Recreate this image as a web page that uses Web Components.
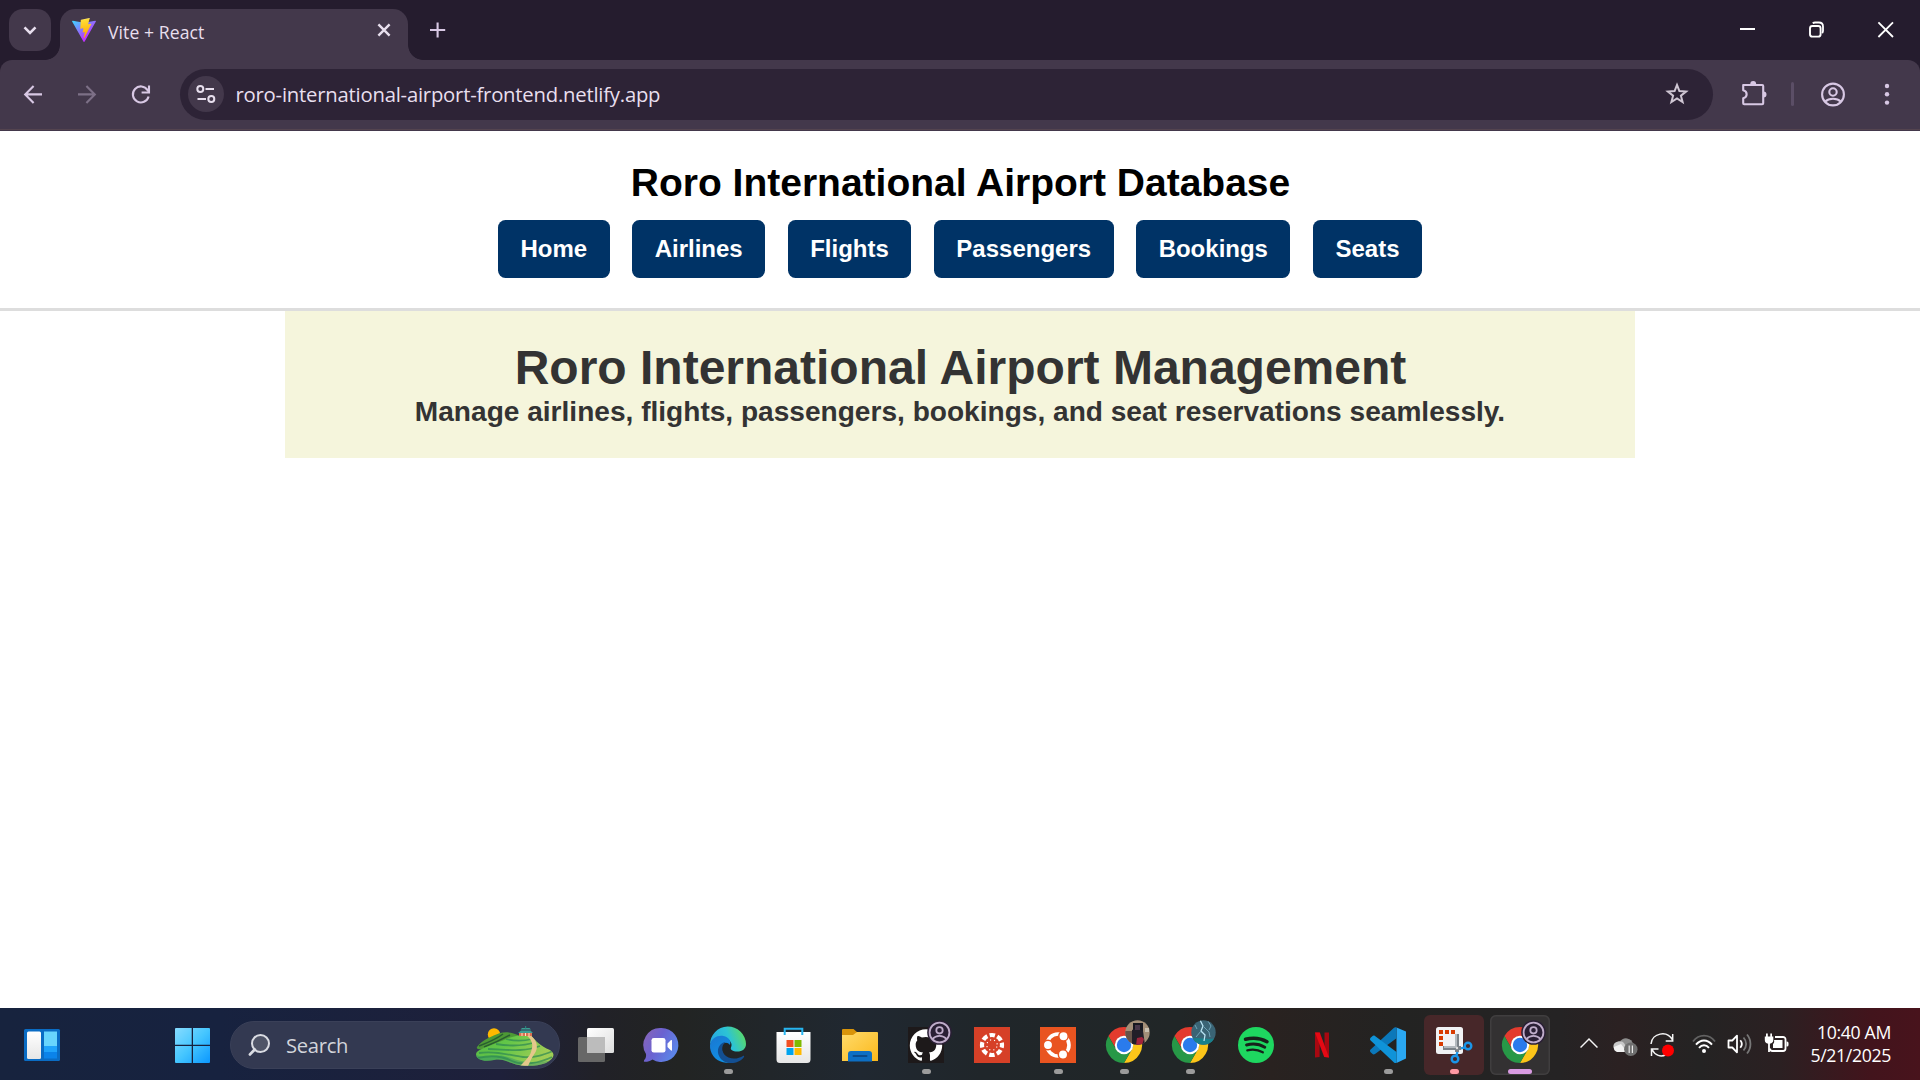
<!DOCTYPE html>
<html lang="en">
<head>
<meta charset="utf-8">
<title>Vite + React</title>
<style>
html, body { margin: 0; height: 100%; background: #fff; overflow: hidden; }
body { font-family: "Liberation Sans", Arial, sans-serif; }
</style>
</head>
<body>
<desktop-screen></desktop-screen>

<template id="t-desktop-screen">
<style>
:host { display: flex; flex-direction: column; width: 1920px; height: 1080px; background: #fff; }
airport-page { flex: 1; }
</style>
<tab-strip><span>Vite + React</span></tab-strip>
<tool-bar>roro-international-airport-frontend.netlify.app</tool-bar>
<airport-page></airport-page>
<task-bar></task-bar>
</template>

<template id="t-tab-strip">
<style>
:host { display: flex; height: 60px; background: #251c2e; box-sizing: border-box; padding: 9px 0 0 9px; }
svg { display: block; }
.menu { width: 42px; height: 42px; border-radius: 14px; background: #43384b; margin-right: 9px; }
.tab { position: relative; width: 348px; height: 51px; box-sizing: border-box; border-radius: 15px 15px 0 0; background: #43384b; display: flex; align-items: flex-start; padding: 9px 12px 0; }
.tab::before, .tab::after { content: ""; position: absolute; bottom: 0; width: 15px; height: 15px; }
.tab::before { left: -15px; background: radial-gradient(circle at 0 0, transparent 14.5px, #43384b 15.2px); }
.tab::after { right: -15px; background: radial-gradient(circle at 100% 0, transparent 14.5px, #43384b 15.2px); }
.name { flex: 1; margin-left: 12px; font: 17.6px/28px "Open Sans", sans-serif; letter-spacing: .08px; color: #e8dfee; white-space: nowrap; }
.plus { margin: 12px 0 0 21px; }
.wins { margin-left: auto; display: flex; }
</style>
<div class="menu"><svg width="42" height="42" viewBox="0 0 42 42"><path d="M15.5 18.3l5.5 5.5 5.5-5.5" fill="none" stroke="#e8dfee" stroke-width="2.6"/></svg></div>
<div class="tab">
<svg width="24" height="24" viewBox="0 0 256 257"><defs><linearGradient id="va" x1="-.828%" x2="57.636%" y1="7.652%" y2="78.411%"><stop stop-color="#41d1ff"/><stop offset="1" stop-color="#bd34fe"/></linearGradient><linearGradient id="vb" x1="43.376%" x2="50.316%" y1="2.242%" y2="89.03%"><stop stop-color="#ffea83"/><stop offset=".083" stop-color="#ffdd35"/><stop offset="1" stop-color="#ffa800"/></linearGradient></defs><path fill="url(#va)" d="M255.153 37.938L134.897 252.976c-2.483 4.44-8.862 4.466-11.382.048L.875 37.958c-2.746-4.814 1.371-10.646 6.827-9.67l120.385 21.517a6.537 6.537 0 0 0 2.322-.004l117.867-21.483c5.438-.991 9.574 4.796 6.877 9.62Z"/><path fill="url(#vb)" d="M185.432.063L96.44 17.501a3.268 3.268 0 0 0-2.634 3.014l-5.474 92.456a3.268 3.268 0 0 0 3.997 3.378l24.777-5.718c2.318-.535 4.413 1.507 3.936 3.838l-7.361 36.047c-.495 2.426 1.782 4.5 4.151 3.78l15.304-4.649c2.372-.72 4.652 1.36 4.15 3.788l-11.698 56.621c-.732 3.542 3.979 5.473 5.943 2.437l1.313-2.028l72.516-144.72c1.215-2.423-.88-5.186-3.54-4.672l-25.505 4.922c-2.396.462-4.435-1.77-3.759-4.114l16.646-57.705c.677-2.35-1.37-4.583-3.769-4.113Z"/></svg>
<div class="name"><slot></slot></div>
<svg width="24" height="24" viewBox="0 0 24 24"><path d="M6.4 6.4l11.2 11.2M17.6 6.4L6.4 17.6" stroke="#e8dfee" stroke-width="2.4"/></svg>
</div>
<svg class="plus" width="18" height="18" viewBox="0 0 18 18"><path d="M1 9h15.200M8.600 1.400V16.600" stroke="#d8c8e4" stroke-width="2.1"/></svg>
<div class="wins">
<svg width="69" height="42" viewBox="0 0 69 42"><path d="M27 20h15" stroke="#fff" stroke-width="2"/></svg>
<svg width="69" height="42" viewBox="0 0 69 42"><path d="M30.700 14.200c.7-.5 1.500-.7 2.400-.7h3.800c2.400 0 4.100 1.700 4.100 4.100v4.200c0 .9-.3 1.700-.8 2.300" fill="none" stroke="#fff" stroke-width="1.8"/><rect x="28" y="17" width="10.6" height="10.6" rx="2.4" fill="none" stroke="#fff" stroke-width="1.9"/></svg>
<svg width="69" height="42" viewBox="0 0 69 42"><path d="M27.400 13.400l14.600 14.600M42 13.400l-14.600 14.600" stroke="#fff" stroke-width="1.8"/></svg>
</div>
</template>

<template id="t-tool-bar">
<style>
:host { display: block; height: 71px; background: #251c2e; }
.bar { display: flex; align-items: center; height: 71px; box-sizing: border-box; padding: 0 6px 2px; background: #43384b; border-radius: 12px 12px 0 0; border-bottom: 1px solid #43384b; box-shadow: inset 0 -1px #54444f; }
svg { display: block; flex: none; }
.omni { flex: 1; display: flex; align-items: center; height: 51px; margin: 0 14px 0 12px; border-radius: 26px; background: #2d2336; }
.info { width: 36px; height: 36px; border-radius: 50%; background: #43384b; margin-left: 7.5px; }
.url { flex: 1; margin-left: 12px; font: 20.3px/30px "Open Sans", sans-serif; letter-spacing: -.22px; color: #e8dfee; white-space: nowrap; padding-bottom: 1px; }
.div { width: 3px; height: 24px; border-radius: 2px; background: #5b4e66; margin: 0 12px 0 10px; }
</style>
<div class="bar">
<svg width="54" height="54" viewBox="0 0 54 54"><path d="M36 27.400H20M27.600 18.900L19.200 27.400l8.400 8.500" fill="none" stroke="#d8c8e4" stroke-width="2.100"/></svg>
<svg width="54" height="54" viewBox="0 0 54 54"><path d="M18 27.400h16M26.400 18.900l8.400 8.500-8.400 8.500" fill="none" stroke="#7d7087" stroke-width="2.100"/></svg>
<svg width="54" height="54" viewBox="0 0 54 54"><path d="M34.600 29.500a8 8 0 1 1-1-6.400l1.400 1.800" fill="none" stroke="#d8c8e4" stroke-width="2.100"/><path d="M35 18.500v7h-7.400" fill="none" stroke="#d8c8e4" stroke-width="2.100"/></svg>
<div class="omni">
<div class="info"><svg width="36" height="36" viewBox="0 0 36 36" fill="none" stroke="#e8dfee" stroke-width="2"><circle cx="12.300" cy="13" r="3"/><path d="M17.500 13h8.500M9.500 23H18"/><circle cx="23.300" cy="23" r="3"/></svg></div>
<div class="url"><slot></slot></div>
<svg width="36" height="36" viewBox="0 0 36 36" style="margin-right:18px"><path d="M18 8.900l2.400 6.200 6.700.4-5.200 4.200 1.700 6.400-5.600-3.600-5.600 3.600 1.700-6.400-5.200-4.200 6.700-.4z" fill="none" stroke="#cfc6d3" stroke-width="2"/></svg>
</div>
<svg width="54" height="54" viewBox="0 0 54 54"><path d="M16.200 18h19c.6 0 1 .4 1 1v17.300c0 .6-.4 1-1 1h-18c-.6 0-1-.4-1-1v-5c4.600-1.300 4.600-6.800 0-8z" fill="none" stroke="#d8c8e4" stroke-width="2.100" stroke-linejoin="round"/><path d="M23.200 17.500a3 3.400 0 0 1 6 0zM36.500 24.500a3 3 0 0 1 0 6z" fill="#d8c8e4"/></svg>
<div class="div"></div>
<svg width="54" height="54" viewBox="0 0 54 54" fill="none" stroke="#d8c8e4" stroke-width="2.100"><circle cx="27" cy="27.500" r="10.900"/><circle cx="27" cy="25" r="3.700"/><path d="M19 34.800c4-4 12-4 16 0"/></svg>
<svg width="54" height="54" viewBox="0 0 54 54" fill="#d8c8e4"><circle cx="27" cy="19" r="2.200"/><circle cx="27" cy="27.300" r="2.200"/><circle cx="27" cy="35.600" r="2.200"/></svg>
</div>
</template>

<template id="t-nav-link">
<style>
:host { display: block; }
a { display: block; height: 58px; box-sizing: border-box; padding: 15px 22.5px; border-radius: 7.5px; background: #003366; color: #fff; font: bold 24px/28px "Liberation Sans", Arial, sans-serif; text-decoration: none; }
</style>
<a><slot></slot></a>
</template>

<template id="t-airport-page">
<style>
:host { display: block; font-family: "Liberation Sans", Arial, sans-serif; background: #fff; }
header { box-sizing: border-box; height: 180px; padding-top: 29px; border-bottom: 3px solid #ddd; text-align: center; }
h1, h2, h3 { margin: 0; white-space: nowrap; }
h1 { font-size: 39px; line-height: 45px; color: #000; padding-left: 1px; }
nav { display: flex; justify-content: center; gap: 22.5px; margin-top: 15px; }
main { width: 1350px; height: 147px; box-sizing: border-box; margin: 0 auto; padding-top: 29px; background: #f5f5dc; color: #333; text-align: center; }
h2 { font-size: 48px; line-height: 56px; padding-left: 1px; }
h3 { font-size: 28.08px; line-height: 32px; }
</style>
<header>
<h1>Roro International Airport Database</h1>
<nav><nav-link>Home</nav-link><nav-link>Airlines</nav-link><nav-link>Flights</nav-link><nav-link>Passengers</nav-link><nav-link>Bookings</nav-link><nav-link>Seats</nav-link></nav>
</header>
<main>
<h2>Roro International Airport Management</h2>
<h3>Manage airlines, flights, passengers, bookings, and seat reservations seamlessly.</h3>
</main>
</template>

<template id="t-task-app">
<style>
:host { display: block; position: relative; width: 60px; height: 60px; flex: none; border-radius: 6px; box-sizing: border-box; }
:host([alert]) { background: #472729; }
:host([active]) { background: #333132; box-shadow: inset 0 0 0 1.500px #403e3f; }
i { display: none; position: absolute; left: 24.500px; bottom: 1px; width: 9px; height: 5px; border-radius: 2.500px; background: #9b9b9b; }
:host([running]) i { display: block; left: 25.500px; }
:host([alert]) i { background: #ff99a4; }
:host([active]) i { display: block; left: 18px; width: 24px; background: #d99be2; }
.badge { position: absolute; left: 31px; top: 5px; }
</style>
<slot></slot><div class="badge"><slot name="badge"></slot></div><i></i>
</template>

<template id="t-chrome-logo">
<style>:host, svg { display: block; }</style>
<svg width="60" height="60" viewBox="-30 -30 60 60"><path fill="#e33b2e" d="M-15.590-9A18 18 0 0 1 15.590-9H0A9 9 0 0 0-7.790 4.500Z"/><path transform="rotate(120)" fill="#fcc519" d="M-15.590-9A18 18 0 0 1 15.590-9H0A9 9 0 0 0-7.790 4.500Z"/><path transform="rotate(240)" fill="#279847" d="M-15.590-9A18 18 0 0 1 15.590-9H0A9 9 0 0 0-7.790 4.500Z"/><circle r="9.200" fill="#fff"/><circle r="7.200" fill="#2a7bec"/></svg>
</template>

<template id="t-profile-badge">
<style>:host, svg { display: block; }</style>
<svg width="25" height="25" viewBox="0 0 25 25"><circle cx="12.500" cy="12.500" r="12.300" fill="#2a1f35"/><g fill="none" stroke="#bfacca" stroke-width="1.800"><circle cx="12.500" cy="12.500" r="9.900"/><circle cx="12.500" cy="10.300" r="3.200"/><path d="M5.500 19c3.500-4.300 10.500-4.300 14 0"/></g></svg>
</template>

<template id="t-task-bar">
<style>
:host { display: flex; align-items: center; height: 72px; box-sizing: border-box; padding: 2px 29px 0 12px; color: #fff; font-family: "Open Sans", sans-serif;
 background: linear-gradient(90deg, #17233e 0, #17223f 220px, #1e203a 500px, #212127 600px, #222423 680px, #202831 860px, #20262a 980px, #212627 1180px, #292220 1270px, #232322 1400px, #252324 1560px, #2b2122 1620px, #242323 1700px, #2b2022 1780px, #42141c 1870px, #48131c 1920px); }
svg { display: block; flex: none; }
.start { margin: 0 8px 0 90px; }
.search { display: flex; align-items: center; width: 330px; height: 48px; box-sizing: border-box; border: 1px solid #3a4058; border-radius: 24px; background: #333951; margin-right: 6px; padding: 0 5px 0 17px; }
.search span { flex: 1; margin-left: 14px; font-size: 20.200px; line-height: 28px; letter-spacing: -.3px; color: #d2d4db; }
.apps { display: flex; gap: 6px; }
.tray { display: flex; align-items: center; margin-left: auto; }
.clock { font-size: 17.700px; line-height: 23px; text-align: right; margin-left: 22px; width: 80px; letter-spacing: -.350px; white-space: nowrap; padding-bottom: 2px; }
.clock div { margin-left: -20px; }
</style>
<task-app><svg width="60" height="60" viewBox="0 0 60 60"><defs><linearGradient id="w1" x2="0" y2="1"><stop stop-color="#fff"/><stop offset="1" stop-color="#e6e6e6"/></linearGradient></defs><rect x="12" y="14" width="36" height="32" rx="1.500" fill="#0a6cc4"/><rect x="15" y="16.500" width="14" height="27.500" rx="1.500" fill="url(#w1)"/><path d="M32 16.500h13V31H32z" fill="#68d5fd"/><path d="M32 31h13v6H32z" fill="#1fa3fb"/><path d="M32 37h13v6.500H32z" fill="#0b83ea"/></svg></task-app>
<task-app class="start"><svg width="60" height="60" viewBox="0 0 60 60"><defs><linearGradient id="g0" gradientUnits="userSpaceOnUse" x1="13" y1="13" x2="48" y2="48"><stop stop-color="#87dcff"/><stop offset=".5" stop-color="#45c6ff"/><stop offset="1" stop-color="#0a97ff"/></linearGradient></defs><path fill="url(#g0)" d="M14 13h15.700v16.700H13V14a1 1 0 0 1 1-1zM31 13h16a1 1 0 0 1 1 1v15.700H31zM13 31h16.700v17H14a1 1 0 0 1-1-1zM31 31h17v16a1 1 0 0 1-1 1H31z"/></svg></task-app>
<div class="search">
<svg width="24" height="24" viewBox="0 0 24 24"><circle cx="12.500" cy="10.500" r="8.500" fill="#4f5467" stroke="#dadce3" stroke-width="2"/><path d="M6.700 16.500L2 21.400" stroke="#dadce3" stroke-width="2.800" stroke-linecap="round"/></svg>
<span>Search</span>
<svg width="80" height="42" viewBox="0 0 80 42"><defs><linearGradient id="h1" x1="0" x2="1" y2=".4"><stop stop-color="#56b644"/><stop offset=".5" stop-color="#62c648"/><stop offset="1" stop-color="#9fcd55"/></linearGradient><clipPath id="hc"><path d="M2 30C3 25 12 24 20 20 30 16 38 12 46 11.500h11C62 17 66 22 76 26c6 4 4 9-4 13-9 3.500-22 3.500-30 1.500-9-3-14-6-22-4.500C10 38 2 36 2 30z"/></clipPath></defs><circle cx="20" cy="10.500" r="6.200" fill="#ffb900"/><path d="M3 23C8 16 18 12 26 9c6-1.500 13-.5 19 2.500L24 20C16 24 8 26 4 25c-1-.5-1.500-1-1-2z" fill="#4d9935"/><path d="M5 22c8-3 16-6 24-12M10 23c8-3 17-7 26-12" stroke="#285e30" stroke-width="1.500" fill="none"/><g clip-path="url(#hc)"><path fill="url(#h1)" d="M0 0h80v42H0z"/><path d="M0 30c10 6 20 0 30 2s18 10 50 4v6H0z" fill="#2f8f68" opacity=".45"/><g fill="none" stroke="#2c8753" stroke-width="1.800" opacity=".7"><path d="M32 15c8 2 18 2 26 0M22 20c12 2 28 2 40-2M14 25c16 0 34 4 52-3M5 29c18-3 32 3 44 4s20-2 30-6M4 34c12-3 24-2 34 3s28 2 40-4"/></g><path d="M52 11c9 7 6 13 5 17s-6 9-11 14h8c3-6 4-9 7-13s3-12-4-18z" fill="#e4c78b"/></g><path d="M45 12h13V8.500H45z" fill="#dc7051"/><path d="M48 9v3M51.500 9v3M55 9v3" stroke="#ffe3c4"/><path d="M44 9l3-2.500h9.500L59 9zM46.500 5.500l1.500-1.500h7.500l1.500 1.500z" fill="#3b9f93"/><path d="M51 2h1.200v2.500H51z" fill="#287c7b"/></svg>
</div>
<div class="apps">
<task-app><svg width="60" height="60" viewBox="0 0 60 60"><defs><linearGradient id="tv" x2="1" y2="1"><stop stop-color="#fff"/><stop offset="1" stop-color="#ddd"/></linearGradient></defs><rect x="12" y="22" width="27" height="25" rx="1.500" fill="#676767"/><rect x="21" y="13" width="27" height="25" rx="1.500" fill="url(#tv)"/><path d="M21 22h18v16H22.500a1.500 1.500 0 0 1-1.500-1.500z" fill="#bcbcbc"/></svg></task-app>
<task-app><svg width="60" height="60" viewBox="0 0 60 60"><defs><linearGradient id="ch" x2="1" y2=".5"><stop stop-color="#8b65b5"/><stop offset=".5" stop-color="#6b62d0"/><stop offset="1" stop-color="#5c85e8"/></linearGradient></defs><path d="M29.500 13a17 17 0 1 1-9 31.500c-2.500 1.700-5 2.400-8 2.300-1 0-.7-1.500.1-2.300 1.300-1.200 1.700-3.500 1.400-5.500A17 17 0 0 1 29.500 13z" fill="url(#ch)"/><rect x="19.500" y="23" width="14" height="14.500" rx="2.300" fill="#fff"/><path d="M35.500 28.500l3.500-3.400c.4-.4 1-.1 1 .4v9.600c0 .5-.6.8-1 .4l-3.500-3.400z" fill="#fff"/></svg></task-app>
<task-app running><svg width="60" height="60" viewBox="0 0 60 60"><defs><linearGradient id="e1" x2="1" y1=".3"><stop stop-color="#27a9e0"/><stop offset=".45" stop-color="#2cc3d5"/><stop offset="1" stop-color="#66e04a"/></linearGradient><linearGradient id="e2" x2=".7" y2="1"><stop stop-color="#1a76d0"/><stop offset="1" stop-color="#0f95e8"/></linearGradient></defs><path d="M12 30a18 18 0 0 1 36-1c0 5-4 7.500-8.500 7.500-5 0-7.500-2-6.500-4 1-2 .8-5-1.500-7C25 20 15 22 12 30z" fill="url(#e1)"/><path d="M12 30c1.500-7.500 8-10 13.500-9 5 .9 8 5 6.500 9-4-5-10-1-8 6 1.800 6.500 8 10 14 8.500-4 3-9 3.700-13 2.800C17 45.500 11.500 38 12 30z" fill="url(#e2)"/><path d="M27.500 27c-5 4-4.500 12 3 15.500 5 2.200 11 .8 14.500-1.500.8-.5 1.500.2 1 1C42 47.500 35 49 29 47.500c-8-2-12-12-6.500-18 1.500-1.600 3.500-2.500 5-2.500z" fill="#134f92"/></svg></task-app>
<task-app><svg width="60" height="60" viewBox="0 0 60 60"><path d="M12.500 17h34v27.500a3.500 3.500 0 0 1-3.500 3.500H16a3.500 3.500 0 0 1-3.500-3.500z" fill="url(#w1)"/><path d="M20.700 20v-6.200h17.600V20" fill="none" stroke="#27b5f0" stroke-width="2"/><path d="M22.500 25h7v7h-7z" fill="#f25022"/><path d="M30.500 25h7v7h-7z" fill="#7fba00"/><path d="M22.500 33h7v7h-7z" fill="#00a4ef"/><path d="M30.500 33h7v7h-7z" fill="#ffb900"/></svg></task-app>
<task-app><svg width="60" height="60" viewBox="0 0 60 60"><defs><linearGradient id="fo" x2="1" y2="1"><stop stop-color="#ffdb6b"/><stop offset="1" stop-color="#fbb81b"/></linearGradient></defs><path d="M12 22v-7a1 1 0 0 1 1-1h10.500l4 3.500L24 22z" fill="#d8940a"/><path d="M12 20h11l4-3h20a1 1 0 0 1 1 1v28H12z" fill="url(#fo)"/><path d="M18 46.500V39a3 3 0 0 1 3-3h18a3 3 0 0 1 3 3v7.500z" fill="#0d6fc4"/><rect x="22.500" y="40" width="15" height="2" rx="1" fill="#0a4b8c"/></svg></task-app>
<task-app running><svg width="60" height="60" viewBox="0 0 60 60"><path d="M12 12h36v36H12z" fill="#1d191a"/><path transform="translate(13.800 13.800) scale(1.350)" fill="#fff" d="M12 .297c-6.630 0-12 5.373-12 12 0 5.303 3.438 9.800 8.205 11.385.6.113.82-.258.82-.577 0-.285-.01-1.040-.015-2.040-3.338.724-4.042-1.610-4.042-1.610C4.422 18.070 3.633 17.700 3.633 17.700c-1.087-.744.084-.729.084-.729 1.205.084 1.838 1.236 1.838 1.236 1.070 1.835 2.809 1.305 3.495.998.108-.776.417-1.305.76-1.605-2.665-.3-5.466-1.332-5.466-5.930 0-1.310.465-2.380 1.235-3.220-.135-.303-.54-1.523.105-3.176 0 0 1.005-.322 3.300 1.230.96-.267 1.980-.399 3-.405 1.020.006 2.040.138 3 .405 2.280-1.552 3.285-1.230 3.285-1.230.645 1.653.24 2.873.12 3.176.765.84 1.230 1.910 1.230 3.220 0 4.610-2.805 5.625-5.475 5.920.42.36.81 1.096.81 2.220 0 1.606-.015 2.896-.015 3.286 0 .315.21.69.825.57C20.565 22.092 24 17.592 24 12.297c0-6.627-5.373-12-12-12"/></svg><profile-badge slot="badge"></profile-badge></task-app>
<task-app><svg width="60" height="60" viewBox="0 0 60 60"><path d="M12 12h36v36H12z" fill="#d64027"/><circle cx="30" cy="30" r="10" fill="none" stroke="#fff" stroke-width="4.200" stroke-dasharray="5.400 2.454" stroke-dashoffset="2.700"/><circle cx="30" cy="30" r="5.200" fill="none" stroke="#fff" stroke-width="1.300" stroke-linecap="round" stroke-dasharray=".1 3.984" transform="rotate(22.500 30 30)"/></svg></task-app>
<task-app running><svg width="60" height="60" viewBox="0 0 60 60"><path d="M12 12h36v36H12z" fill="#e95420"/><circle cx="30" cy="30" r="11" fill="none" stroke="#fff" stroke-width="3.600"/><g fill="#fff" stroke="#e95420" stroke-width="1.500"><circle cx="20" cy="30" r="4.700"/><circle cx="35.500" cy="21.200" r="4.700"/><circle cx="35" cy="39.500" r="4.700"/></g></svg></task-app>
<task-app running><chrome-logo></chrome-logo><svg slot="badge" width="25" height="25" viewBox="0 0 25 25"><defs><clipPath id="av"><circle cx="12.500" cy="12.500" r="12.200"/></clipPath></defs><g clip-path="url(#av)"><path d="M0 0h25v25H0z" fill="#a38f78"/><path d="M0 11h7l3 14H0z" fill="#665449"/><path d="M8 3h10v8H8z" fill="#171820"/><path d="M7 10l5-2 6 3 2 14H7z" fill="#211e28"/><path d="M10 5h5v5h-5z" fill="#48374a"/><path d="M12 18l5-1 2 2-2 6h-6z" fill="#a1243c"/><path d="M20 8h4v4h-4z" fill="#c9c0b0"/></g></svg></task-app>
<task-app running><chrome-logo></chrome-logo><svg slot="badge" width="25" height="25" viewBox="0 0 25 25"><g clip-path="url(#av)"><path d="M0 0h25v25H0z" fill="#3a6475"/><path d="M0 19c8-3 16 2 25-1v7H0z" fill="#19808b"/><path d="M9 0l3 6-2 5 4 4-1 6" fill="none" stroke="#b9e3f3" stroke-width="1.300"/><path d="M12 6l6 6 1 5M10 11l-5 6M17 1l3 5-2 4M4 5l2 4" fill="none" stroke="#6fa3b7"/></g></svg></task-app>
<task-app><svg width="60" height="60" viewBox="0 0 60 60"><circle cx="30" cy="30" r="18" fill="#1ed760"/><g fill="none" stroke="#17211b" stroke-linecap="round"><path d="M19.500 24.300c7.500-2 15-1.300 21.500 2.400" stroke-width="3.500"/><path d="M20.500 30c6.500-1.700 13-.9 18.300 2.300" stroke-width="2.900"/><path d="M21.300 35.300c5.500-1.300 11-.6 15.500 2" stroke-width="2.300"/></g></svg></task-app>
<task-app><svg width="60" height="60" viewBox="0 0 60 60"><path d="M23 17.500h4.600V42l-4.600.6zM32.500 17.500H37v25.100l-4.500-.6z" fill="#a80811"/><path d="M23 17.500h4.800L37 42.600l-4.800-.6z" fill="#e50914"/></svg></task-app>
<task-app running><svg width="60" height="60" viewBox="0 0 60 60"><path d="M38.500 12.500L48 16.500v27l-9.500 4.500z" fill="#2aa8f2"/><path d="M38.500 12.500v10.800L17 39c-1 .7-2 .5-2.700-.2l-1.700-1.600c-.8-.8-.8-2 0-2.700L36 12.800c.8-.7 1.700-.7 2.500-.3z" fill="#0b78ba"/><path d="M38.500 47.800V37L17 21c-1-.7-2-.5-2.700.2l-1.700 1.600c-.8.8-.8 2 0 2.700L36 47.500c.8.700 1.700.7 2.500.3z" fill="#0f93d8"/></svg></task-app>
<task-app running alert><svg width="60" height="60" viewBox="0 0 60 60"><rect x="12" y="12" width="27" height="27" rx="2.500" fill="#f1f2f4"/><path fill="#d83b01" d="M15 15h4v4h-4zM21 15h4v4h-4zM27 15h4v4h-4zM15 21h4v4h-4zM15 27h4v4h-4z"/><path d="M33 19v18M19 33h18" stroke="#7b8288" stroke-width="4"/><path d="M32 19v13H20" fill="none" stroke="#b3b9be" stroke-width="2"/><circle cx="33" cy="33" r="1.200" fill="#ddd"/><g fill="none" stroke="#1a96e8" stroke-width="2.400"><circle cx="44" cy="31" r="3.300"/><circle cx="31" cy="44" r="3.300"/><path d="M37 33.400l4-1M33.400 37l-1 4"/></g></svg></task-app>
<task-app active><chrome-logo></chrome-logo><profile-badge slot="badge"></profile-badge></task-app>
</div>
<div class="tray">
<svg width="18" height="24" viewBox="0 0 18 24" style="margin-right:15px"><path d="M.5 14.500L9 6l8.500 8.500" fill="none" stroke="#f5f5f5" stroke-width="1.500"/></svg>
<svg width="25" height="24" viewBox="0 0 25 24" style="margin-right:12px"><path d="M7 9a7 7 0 0 1 13 2l-10 5z" fill="#8d8d8d"/><path d="M5 8.500c5-1 8 2 8 9H4c-5-1-5-8 1-9z" fill="#c8c8c8"/><path d="M1 14l7-3 6 8H5c-3 0-4.500-2.500-4-5z" fill="#f1f1f1"/><circle cx="17.800" cy="16.300" r="6.700" fill="#6f6f6f"/><path d="M16.200 12.500v7.500M19.400 12.500v7.500" stroke="#e8e8e8" stroke-width="1.200"/></svg>
<svg width="24" height="26" viewBox="0 0 24 26" style="margin-right:18px" fill="none" stroke="#f5f5f5" stroke-width="1.500"><path d="M1 12C2 1 17-2 22.500 8M22.700 2v7h-7M1.500 24v-7h7M2 17.500c3 6 9 8 14 5"/><circle cx="18" cy="18.500" r="6" fill="#f00" stroke="none"/></svg>
<svg width="24" height="24" viewBox="0 0 24 24" style="margin-right:11px" fill="none" stroke="#fff" stroke-width="1.900"><path d="M1 8.500c6-7.800 16-7.800 22 0" stroke="#626262"/><path d="M4 11.700c4.500-5.700 11.500-5.700 16 0M7 14.900c3-3.600 7-3.600 10 0"/><circle cx="12" cy="18" r="2" fill="#fff" stroke="none"/></svg>
<svg width="25" height="24" viewBox="0 0 25 24" style="margin-right:12px" fill="none" stroke="#fff" stroke-width="1.800"><path d="M1.500 7.500h3.800l4.700-4.800v16.600l-4.700-4.800H1.500z" stroke-linejoin="round"/><path d="M13.300 7.200c1.800 2.200 1.800 5.400 0 7.600"/><path d="M16.500 4.500c3.500 3.900 3.500 9.100 0 13M20 1.500c4.600 5.500 4.600 13.500 0 19" stroke="#777"/></svg>
<svg width="25" height="24" viewBox="0 1 25 24"><path d="M11 5h8a2.500 2.500 0 0 1 2.500 2.500v9A2.500 2.500 0 0 1 19 19H8.500A2.500 2.500 0 0 1 6 16.500" fill="none" stroke="#fff" stroke-width="1.800"/><path d="M10 8h8.500v8H9v-4c1-1 1.500-2 1-4zM22.500 9.500h.5a1.500 1.500 0 0 1 1.500 1.500v2a1.500 1.500 0 0 1-1.500 1.500h-.5zM.8 4.500h8.500V8c0 2-1.300 3.500-3.400 3.800V20H4.100v-8.200C2 11.500.8 10 .8 8zM2 1.500h1.800V5H2zM6.300 1.500H8V5H6.300z" fill="#fff"/></svg>
<div class="clock"><div>10:40 AM</div><div>5/21/2025</div></div>
</div>
</template>

<script>
class TemplateElement extends HTMLElement {
  constructor() {
    super();
    const source = document.getElementById('t-' + this.localName);
    this.attachShadow({ mode: 'open' }).appendChild(source.content.cloneNode(true));
  }
}
['nav-link', 'chrome-logo', 'profile-badge', 'task-app', 'task-bar', 'airport-page', 'tool-bar', 'tab-strip', 'desktop-screen']
  .forEach(name => customElements.define(name, class extends TemplateElement {}));
</script>
</body>
</html>
